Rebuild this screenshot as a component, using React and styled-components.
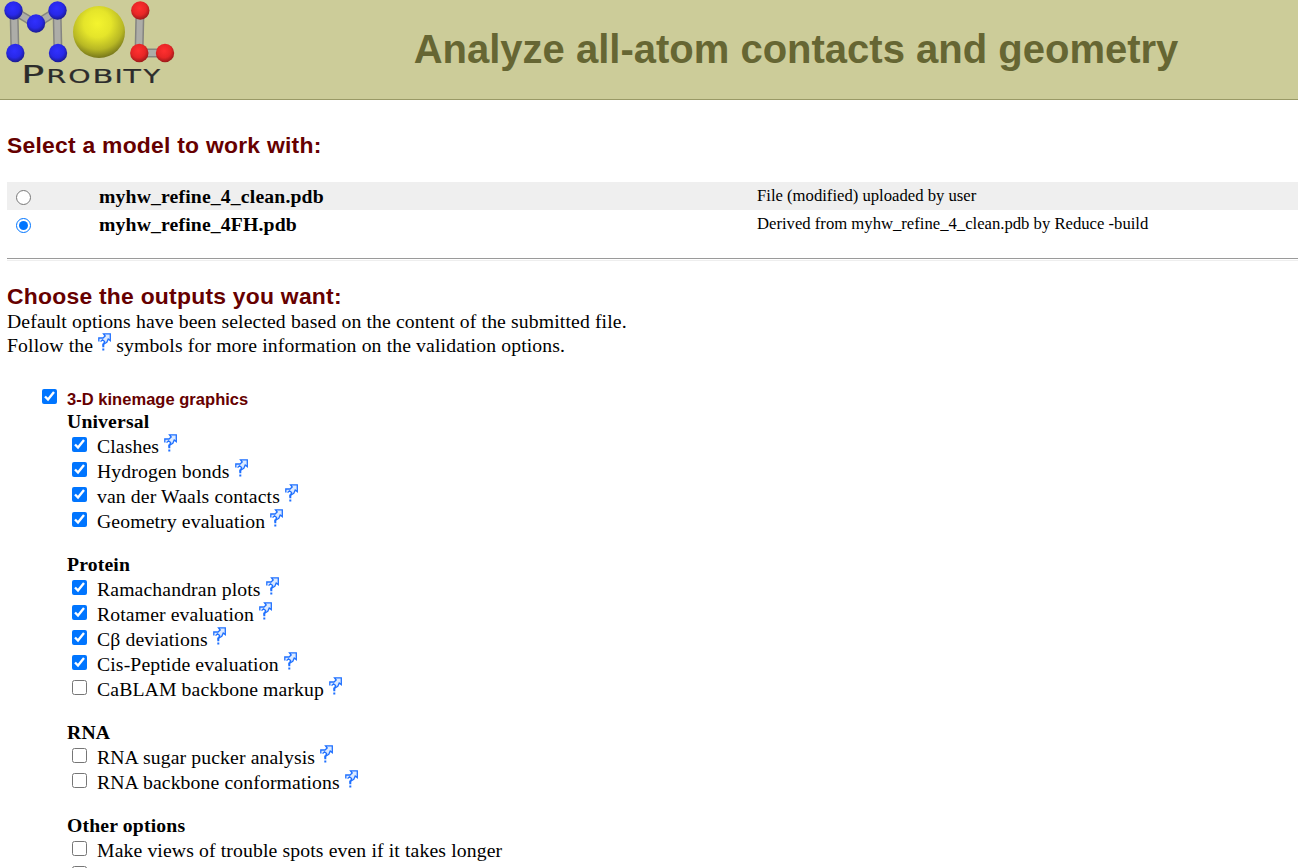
import React, { Component } from "react";
import styled, { createGlobalStyle } from "styled-components";

const GlobalStyle = createGlobalStyle`
  html, body {
    margin: 0;
    overflow: hidden;
    background-color: white;
  }
`;

const Page = styled.div`
  height: 868px;
  overflow: hidden;
  font-family: "Liberation Serif", "Times New Roman", serif;
  font-size: 19.7px;
  letter-spacing: 0.13px;
  line-height: 24px;
  color: black;
`;

const Header = styled.div`
  display: flex;
  box-sizing: border-box;
  height: 100px;
  background-color: #cccc99;
  border-bottom: 1px solid #999966;
  letter-spacing: 0;
  svg {
    flex: none;
  }
  h1 {
    flex: 1;
    margin: 0;
    padding: 26px 0 0 114px;
    text-align: center;
    font-family: "Liberation Sans", Arial, sans-serif;
    font-size: 40px;
    line-height: 46px;
    color: #666633;
    white-space: nowrap;
  }
`;

const Content = styled.div`
  padding-left: 7px;
`;

const Heading = styled.h3`
  margin: 0;
  padding-top: ${(props) => props.$top}px;
  font-family: "Liberation Sans", Arial, sans-serif;
  font-size: 22.9px;
  line-height: 26px;
  letter-spacing: 0.24px;
  color: #660000;
`;

const ModelTable = styled.div`
  margin-top: 24px;
`;

const ModelRow = styled.label`
  display: grid;
  grid-template-columns: 92px 658px 1fr;
  height: 28px;
  background-color: ${(props) => (props.$shaded ? "#efefef" : "white")};
  input {
    width: 15px;
    height: 15px;
    margin: 8px 0 0 9px;
  }
  b {
    line-height: 28px;
    letter-spacing: 0.16px;
  }
  small {
    font-size: 16.667px;
    line-height: 28px;
    letter-spacing: 0;
  }
`;

const Rule = styled.div`
  height: 1px;
  margin-top: 20px;
  border-top: 1px solid #9a9a9a;
  border-bottom: 1px solid #eeeeee;
`;

const HelpIcon = styled.svg`
  width: 13px;
  height: 19px;
  margin-top: -3px;
  vertical-align: baseline;
`;

const Outputs = styled.div`
  margin: 28px 0 0 35px;
`;

const MainOption = styled.label`
  display: flex;
  height: 25px;
  input {
    width: 15px;
    height: 15px;
    margin: 4px 10px 0 0;
  }
  h5 {
    margin: 0;
    font-family: "Liberation Sans", Arial, sans-serif;
    font-size: 16.5px;
    line-height: 29px;
    letter-spacing: 0.03px;
    color: #660000;
  }
`;

const Group = styled.div`
  padding-left: 25px;
  margin-bottom: 18px;
  b {
    display: block;
    height: 25px;
    line-height: 22px;
    letter-spacing: 0.16px;
  }
`;

const Option = styled.label`
  display: flex;
  height: 25px;
  line-height: 22px;
  white-space: pre;
  input {
    flex: none;
    width: 15px;
    height: 15px;
    margin: 2px 10px 0 5px;
  }
`;

const Help = () => (
  <HelpIcon viewBox="0 0 13 19" fill="none" stroke="#1f70ff">
    <path
      d="M0.8 8.4 V5 H5 L7.2 3 L5.5 0.8 H12.3 V7.6 L10.2 6 L8.8 9.2 L5.5 11.2 L6.6 8.4 L4.5 6.8 L2.6 8.6"
      fill="#dceaff"
      strokeWidth="1.3"
    />
    <path d="M5.3 10.4 V14.2 M5.3 15.6 V17.6" strokeWidth="2" />
  </HelpIcon>
);

const wordmark = [
  ["P", 21.3, 1.56, 24.5],
  ["R", 46.2, 1.45, 20],
  ["O", 68.2, 1.42, 20],
  ["B", 92.6, 1.52, 20],
  ["I", 114.5, 1.4, 20],
  ["T", 123.6, 1.42, 20],
  ["Y", 143.5, 1.36, 20]
];

const Logo = () => (
  <svg width="180" height="99" viewBox="0 0 180 99">
    <defs>
      <radialGradient id="blue" cx="45%" cy="38%" r="62%">
        <stop offset="0" stopColor="#3030ff" />
        <stop offset="0.6" stopColor="#2828e8" />
        <stop offset="1" stopColor="#1c1c90" />
      </radialGradient>
      <radialGradient id="red" cx="45%" cy="38%" r="62%">
        <stop offset="0" stopColor="#ff3030" />
        <stop offset="0.6" stopColor="#e82626" />
        <stop offset="1" stopColor="#9c1a1a" />
      </radialGradient>
      <radialGradient id="yellow" cx="47%" cy="34%" r="66%">
        <stop offset="0" stopColor="#f4f42e" />
        <stop offset="0.4" stopColor="#e5e52a" />
        <stop offset="0.75" stopColor="#b8b824" />
        <stop offset="1" stopColor="#77771a" />
      </radialGradient>
    </defs>
    <g stroke="#858580" strokeWidth="9">
      <path d="M14 11 L15 53 M57 11 L58 53 M14 11 L36 24 L57 11 M140 11 L139 53 H165" fill="none" />
    </g>
    <g stroke="#adada8" strokeWidth="6">
      <path d="M14 11 L15 53 M57 11 L58 53 M14 11 L36 24 L57 11 M140 11 L139 53 H165" fill="none" />
    </g>
    <g fill="url(#blue)">
      <circle cx="13.5" cy="10.5" r="9.2" />
      <circle cx="57.5" cy="10.5" r="9.2" />
      <circle cx="36" cy="23.5" r="9.2" />
      <circle cx="15.3" cy="53" r="9.2" />
      <circle cx="58" cy="53" r="9.2" />
    </g>
    <circle cx="99" cy="32" r="26" fill="url(#yellow)" />
    <g fill="url(#red)">
      <circle cx="140.3" cy="10.5" r="9.2" />
      <circle cx="139.3" cy="53" r="9.2" />
      <circle cx="165" cy="53" r="9.2" />
    </g>
    <g fontFamily="DejaVu Sans, sans-serif" fill="#2c2c2c" stroke="#2c2c2c" strokeWidth="0.2">
      {wordmark.map(([letter, x, stretch, size]) => (
        <text key={letter} fontSize={size} transform={`translate(${x} 83.3) scale(${stretch} 1)`}>
          {letter}
        </text>
      ))}
    </g>
  </svg>
);

const groups = [
  {
    title: "Universal",
    options: [
      ["Clashes", true],
      ["Hydrogen bonds", true],
      ["van der Waals contacts", true],
      ["Geometry evaluation", true]
    ]
  },
  {
    title: "Protein",
    options: [
      ["Ramachandran plots", true],
      ["Rotamer evaluation", true],
      ["Cβ deviations", true],
      ["Cis-Peptide evaluation", true],
      ["CaBLAM backbone markup", false]
    ]
  },
  {
    title: "RNA",
    options: [
      ["RNA sugar pucker analysis", false],
      ["RNA backbone conformations", false]
    ]
  },
  {
    title: "Other options",
    noHelp: true,
    options: [
      ["Make views of trouble spots even if it takes longer", false],
      ["", false]
    ]
  }
];

class App extends Component {
  render() {
    return (
      <Page>
        <GlobalStyle />
        <Header>
          <Logo />
          <h1>Analyze all-atom contacts and geometry</h1>
        </Header>
        <Content>
          <Heading $top={32}>Select a model to work with:</Heading>
          <ModelTable>
            <ModelRow $shaded>
              <input type="radio" name="model" />
              <b>myhw_refine_4_clean.pdb</b>
              <small>File (modified) uploaded by user</small>
            </ModelRow>
            <ModelRow>
              <input type="radio" name="model" defaultChecked />
              <b>myhw_refine_4FH.pdb</b>
              <small>Derived from myhw_refine_4_clean.pdb by Reduce -build</small>
            </ModelRow>
          </ModelTable>
          <Rule />
          <Heading $top={22}>Choose the outputs you want:</Heading>
          <div>
            Default options have been selected based on the content of the submitted file.
            <br />
            Follow the <Help /> symbols for more information on the validation options.
          </div>
          <Outputs>
            <MainOption>
              <input type="checkbox" defaultChecked />
              <h5>3-D kinemage graphics</h5>
            </MainOption>
            {groups.map((group) => (
              <Group key={group.title}>
                <b>{group.title}</b>
                {group.options.map(([label, checked]) => (
                  <Option key={label}>
                    <input type="checkbox" defaultChecked={checked} />
                    <span>
                      {label} {!group.noHelp && <Help />}
                    </span>
                  </Option>
                ))}
              </Group>
            ))}
          </Outputs>
        </Content>
      </Page>
    );
  }
}

export default App;
